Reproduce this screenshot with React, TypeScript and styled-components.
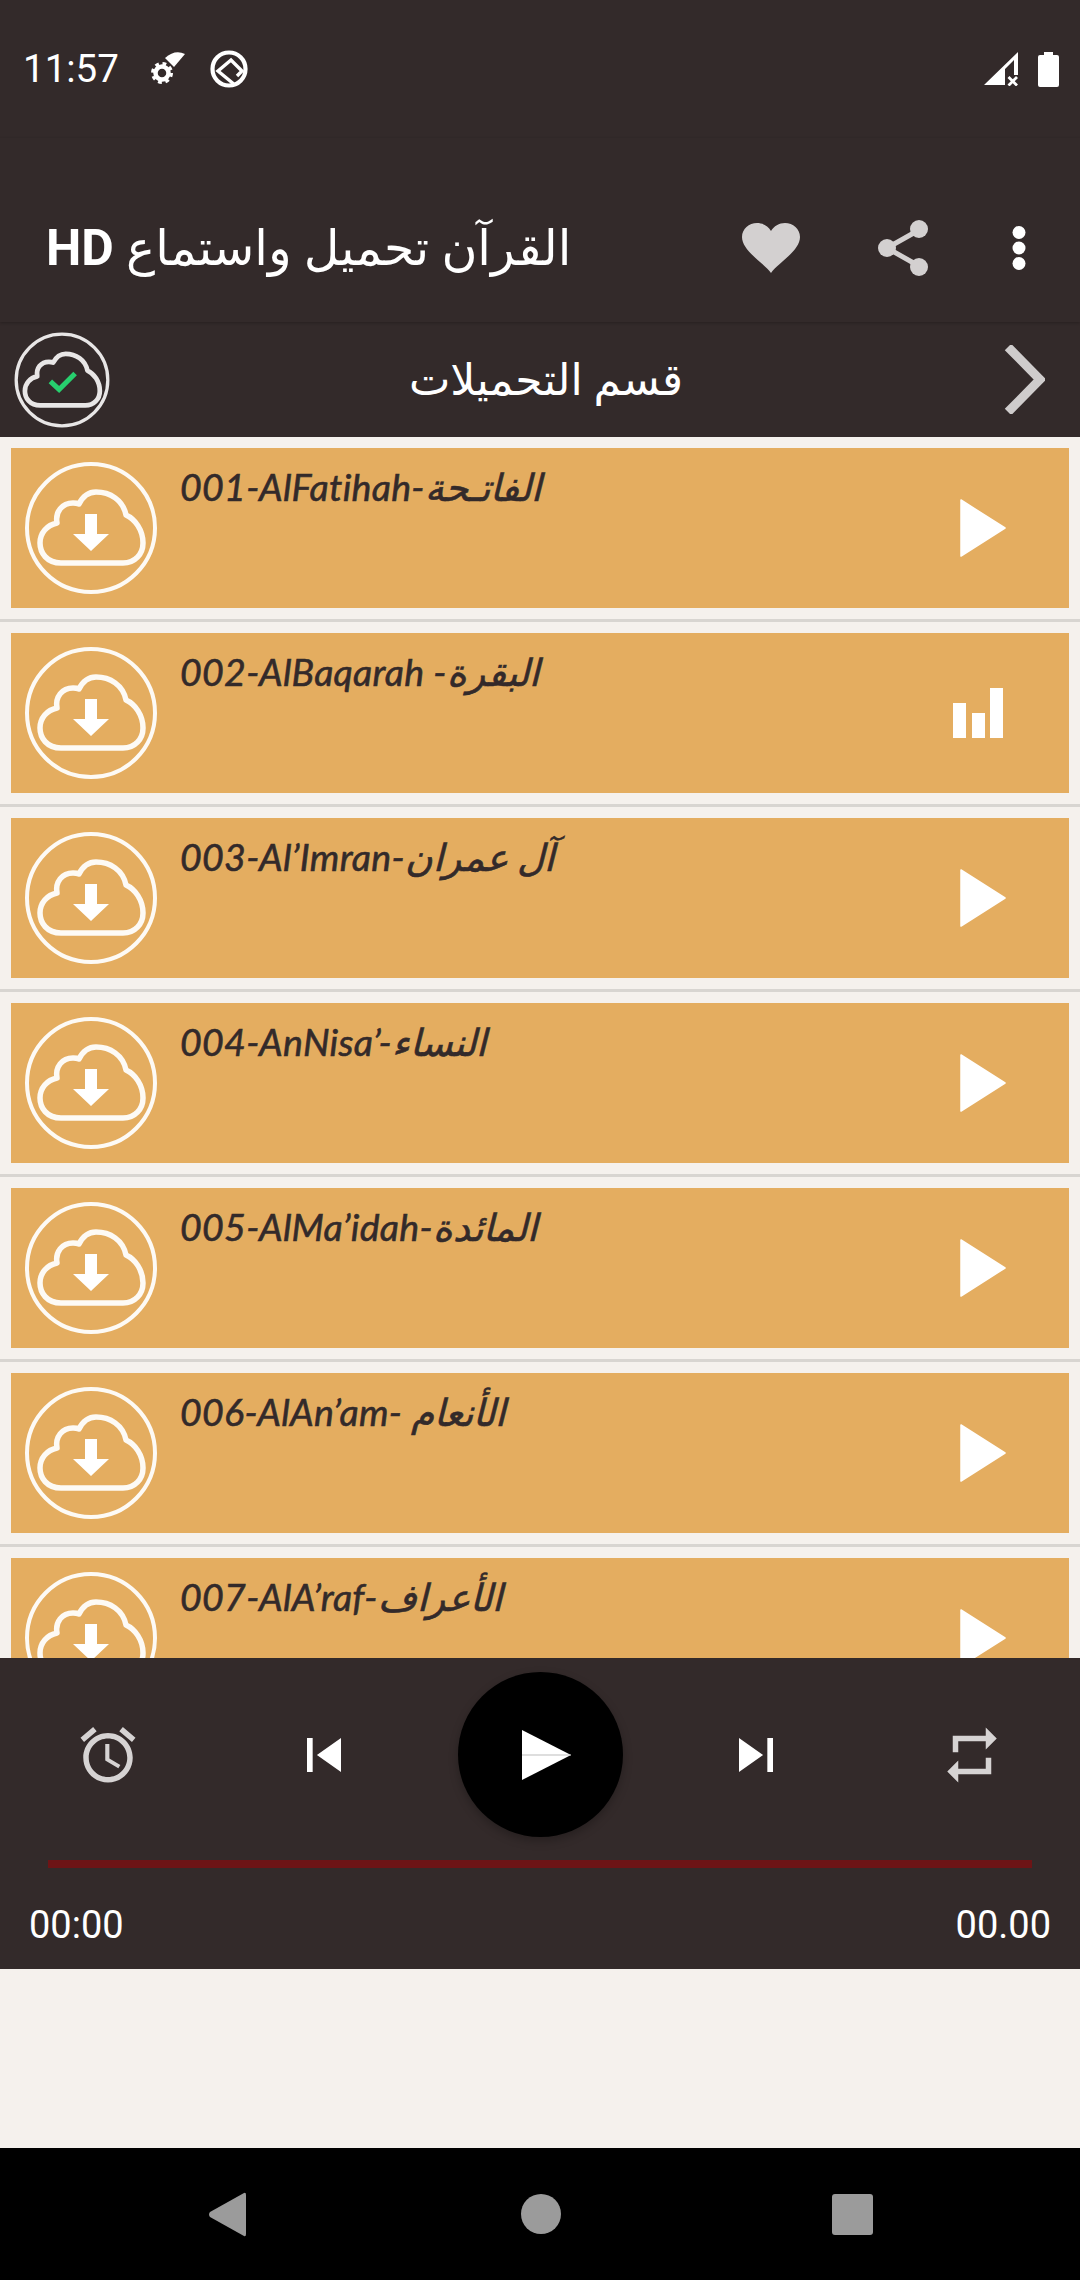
import React from "react";
import styled, { createGlobalStyle } from "styled-components";

const Global = createGlobalStyle`
  html, body { margin: 0; padding: 0; background: #f5f1ed; }
  * { box-sizing: border-box; }
`;

const Page = styled.div`
  width: 1080px;
  height: 2280px;
  display: flex;
  flex-direction: column;
  overflow: hidden;
  background: #f5f1ed;
  font-family: Roboto, "DejaVu Sans", sans-serif;
`;

const StatusBar = styled.div`
  height: 138px;
  flex: none;
  background: #332a2a;
  display: flex;
  align-items: center;
  padding: 0 21px 0 23px;
  color: #fff;
`;
const Clock = styled.span`
  font-size: 38.5px;
  line-height: 44px;
  margin-right: 31px;
`;
const StatusGap = styled.div`
  flex: 1;
`;
const StatusIcon = styled.svg<{ $gap?: number }>`
  display: block;
  flex: none;
  margin-right: ${(p) => p.$gap ?? 0}px;
`;

const Toolbar = styled.div`
  height: 184px;
  flex: none;
  background: #332a2a;
  display: flex;
  align-items: center;
  padding: 36px 54px 0 46px;
  position: relative;
  z-index: 1;
  box-shadow: 0 1px 3px rgba(0, 0, 0, 0.25);
`;
const AppTitle = styled.div`
  flex: 1;
  color: #fff;
  font-size: 49px;
  white-space: nowrap;
  text-align: left;
`;
const AppTitleText = styled.span`
  display: inline-block;
`;
const AppTitleBadge = styled.span`
  font-weight: 700;
  font-size: 50px;
`;
const ToolIcon = styled.svg<{ $gap: number }>`
  display: block;
  flex: none;
  margin-left: ${(p) => p.$gap}px;
`;

const SubHeader = styled.div`
  height: 115px;
  flex: none;
  background: #332a2a;
  display: flex;
  align-items: center;
  padding: 0 35px 0 14px;
`;
const SubTitle = styled.div`
  flex: 1;
  text-align: center;
  color: #fff;
  font-size: 44px;
  padding-right: 22px;
`;
const Chevron = styled.svg`
  flex: none;
  display: block;
`;

const List = styled.div`
  flex: 1;
  min-height: 0;
  overflow: hidden;
`;
const Row = styled.div`
  height: 185px;
  padding: 11px;
  border-bottom: 3px solid #d8d5d1;
`;
const Card = styled.div`
  height: 160px;
  background: #e4ad60;
  display: flex;
  align-items: center;
  padding: 0 63px 0 14px;
`;
const RowTitle = styled.div`
  flex: 1;
  align-self: flex-start;
  margin: 14px 0 0 23px;
  font-family: Lato, "DejaVu Sans", sans-serif;
  font-style: italic;
  font-weight: 400;
  font-size: 37.5px;
  letter-spacing: 0.3px;
  line-height: 50px;
  color: #332a2a;
  -webkit-text-stroke: 0.6px #332a2a;
  white-space: nowrap;
`;
const RowIcon = styled.svg`
  flex: none;
  display: block;
`;
const BarsIcon = styled.svg`
  flex: none;
  display: block;
  margin: 0 3px 0 -7px;
`;

const Player = styled.div`
  height: 311px;
  flex: none;
  background: #332a2a;
  padding-top: 14px;
  display: flex;
  flex-direction: column;
`;
const Controls = styled.div`
  height: 165px;
  display: grid;
  grid-template-columns: repeat(5, 1fr);
  align-items: center;
  justify-items: center;
`;
const BigPlay = styled.div`
  width: 165px;
  height: 165px;
  border-radius: 50%;
  background: #000;
  display: flex;
  align-items: center;
  justify-content: center;
  box-shadow: 0 4px 10px rgba(0, 0, 0, 0.25);
`;
const BigPlayIcon = styled.svg`
  margin-left: 12px;
`;
const Progress = styled.div`
  height: 8px;
  margin: 23px 48px 0;
  background: #6d1416;
`;
const Times = styled.div`
  margin-top: 35px;
  padding: 0 29px;
  display: flex;
  justify-content: space-between;
  color: #fff;
  font-size: 38px;
  line-height: 44px;
`;

const Blank = styled.div`
  height: 179px;
  flex: none;
  background: #f5f1ed;
`;

const NavBar = styled.div`
  height: 132px;
  flex: none;
  background: #000;
  display: flex;
  align-items: center;
  justify-content: center;
  gap: 271px;
`;
const BackIcon = styled.svg`
  display: block;
  margin-right: 4px;
`;
const Dot = styled.div`
  width: 40px;
  height: 40px;
  border-radius: 50%;
  background: #9b9b9b;
`;
const Square = styled.div`
  width: 41px;
  height: 41px;
  border-radius: 3px;
  background: #9b9b9b;
`;

const CLOUD =
  "M36 101 C22 101 15 91 15 81 C15 71 22 63 32 61 C30 50 37 41 48 41 C50 41 52 41 54 42 C58 34 64 30 71 30 C85 30 98 38 101 53 C110 57 118 68 118 81 C118 92 110 101 98 101 Z";

const CloudDown = () => (
  <RowIcon width="132" height="132" viewBox="0 0 132 132">
    <circle cx="66" cy="66" r="64" fill="none" stroke="#fdfaf5" strokeWidth="4" />
    <path d={CLOUD} fill="none" stroke="#fdfaf5" strokeWidth="5.5" strokeLinejoin="round" />
    <path d="M60 52 H72 V72 H84 L66 89 L48 72 H60 Z" fill="#fff" />
  </RowIcon>
);

const CloudOk = () => (
  <RowIcon width="96" height="96" viewBox="0 0 132 132">
    <circle cx="66" cy="66" r="63" fill="none" stroke="#e8e6e6" strokeWidth="4.5" />
    <path d={CLOUD} fill="none" stroke="#e8e6e6" strokeWidth="6.5" strokeLinejoin="round" />
    <path d="M50 68 L62 79 L84 57" fill="none" stroke="#27cf6e" strokeWidth="7" />
  </RowIcon>
);

const PlayMark = () => (
  <RowIcon width="46" height="58" viewBox="0 0 46 58">
    <path d="M1 1 L45 29 L1 57 Z" fill="#fff" stroke="#fff" strokeWidth="1.5" strokeLinejoin="round" />
  </RowIcon>
);

const BarsMark = () => (
  <BarsIcon width="50" height="50" viewBox="0 0 50 50">
    <rect x="0" y="15" width="13" height="35" fill="#fff" />
    <rect x="19" y="25" width="13" height="25" fill="#fff" />
    <rect x="37" y="0" width="13" height="50" fill="#fff" />
  </BarsIcon>
);

const tracks = [
  "001-AlFatihah-الفاتـحة",
  "002-AlBaqarah -البقرة",
  "003-Al’Imran-آل عمران",
  "004-AnNisa’-النساء",
  "005-AlMa’idah-المائدة",
  "006-AlAn’am- الأنعام",
  "007-AlA’raf-الأعراف",
];

export default function App() {
  return (
    <Page>
      <Global />
      <StatusBar>
        <Clock>11:57</Clock>
        <StatusIcon width="38" height="40" viewBox="0 0 38 40" $gap={22}>
          <path d="M15 9 Q25 0 35 5 L24 18 Z" fill="#fff" />
          <circle cx="12" cy="24" r="6.5" fill="none" stroke="#fff" strokeWidth="4.5" />
          <circle cx="12" cy="24" r="9.5" fill="none" stroke="#fff" strokeWidth="3" strokeDasharray="3.8 3.7" />
        </StatusIcon>
        <StatusIcon width="38" height="38" viewBox="0 0 38 38">
          <circle cx="19" cy="19" r="16.5" fill="none" stroke="#fff" strokeWidth="4.2" />
          <path d="M27 26 L32 21 L21 10 L8 21 L25 35" fill="none" stroke="#fff" strokeWidth="3.4" />
        </StatusIcon>
        <StatusGap />
        <StatusIcon width="34" height="34" viewBox="0 0 34 34" $gap={20}>
          <path d="M0 33 L34 0 V23 H30 V8 L21 17 V33 Z" fill="#fff" />
          <path d="M24.5 25 L33 33.5 M33 25 L24.5 33.5" stroke="#fff" strokeWidth="2.8" />
        </StatusIcon>
        <StatusIcon width="21" height="35" viewBox="0 0 21 35">
          <path d="M6 0 H15 V3 H19 Q21 3 21 5 V33 Q21 35 19 35 H2 Q0 35 0 33 V5 Q0 3 2 3 H6 Z" fill="#fff" />
        </StatusIcon>
      </StatusBar>

      <Toolbar>
        <AppTitle>
          <AppTitleText dir="rtl">
            القرآن تحميل واستماع <AppTitleBadge>HD</AppTitleBadge>
          </AppTitleText>
        </AppTitle>
        <ToolIcon $gap={0} width="58" height="50" viewBox="0 0 58 50">
          <path d="M29 50 C22 40 0 28 0 14 C0 6 7 0 15 0 C21 0 26 3 29 8 C32 3 37 0 43 0 C51 0 58 6 58 14 C58 28 36 40 29 50 Z" fill="#d3d0d0" />
        </ToolIcon>
        <ToolIcon $gap={78} width="50" height="56" viewBox="0 0 50 56">
          <path d="M41 10 L9 28 L41 46" fill="none" stroke="#d3d0d0" strokeWidth="5" />
          <circle cx="41" cy="9" r="9" fill="#d3d0d0" />
          <circle cx="9" cy="28" r="9" fill="#d3d0d0" />
          <circle cx="41" cy="47" r="9" fill="#d3d0d0" />
        </ToolIcon>
        <ToolIcon $gap={84} width="14" height="44" viewBox="0 0 14 44">
          <circle cx="7" cy="6.5" r="6.5" fill="#fff" />
          <circle cx="7" cy="22" r="6.5" fill="#fff" />
          <circle cx="7" cy="37.5" r="6.5" fill="#fff" />
        </ToolIcon>
      </Toolbar>

      <SubHeader>
        <CloudOk />
        <SubTitle>قسم التحميلات</SubTitle>
        <Chevron width="41" height="69" viewBox="0 0 41 69">
          <path d="M4 2 L36 34.5 L4 67" fill="none" stroke="#cfcccc" strokeWidth="9" />
        </Chevron>
      </SubHeader>

      <List>
        {tracks.map((t, i) => (
          <Row key={t}>
            <Card>
              <CloudDown />
              <RowTitle>{t}</RowTitle>
              {i === 1 ? <BarsMark /> : <PlayMark />}
            </Card>
          </Row>
        ))}
      </List>

      <Player>
        <Controls>
          <svg width="66" height="66" viewBox="0 0 24 24" fill="#d6d3d3">
            <path d="M22 5.72l-4.6-3.86-1.29 1.53 4.6 3.86L22 5.72zM7.88 3.39L6.6 1.86 2 5.71l1.29 1.53 4.59-3.85zM12.5 8H11v6l4.75 2.85.75-1.23-4-2.37V8zM12 4c-4.97 0-9 4.03-9 9s4.02 9 9 9c4.97 0 9-4.03 9-9s-4.03-9-9-9zm0 16c-3.87 0-7-3.13-7-7s3.13-7 7-7 7 3.13 7 7-3.13 7-7 7z" />
          </svg>
          <svg width="68" height="68" viewBox="0 0 24 24" fill="#fff">
            <path d="M6 6h2v12H6zm3.5 6l8.5 6V6z" />
          </svg>
          <BigPlay>
            <BigPlayIcon width="49" height="50" viewBox="0 0 49 50">
              <path d="M0 0 L49 25 L0 50 Z" fill="#fff" />
              <path d="M0 25 H49" stroke="#bdbdbd" strokeWidth="1" />
            </BigPlayIcon>
          </BigPlay>
          <svg width="68" height="68" viewBox="0 0 24 24" fill="#fff">
            <path d="M6 18l8.5-6L6 6v12zM16 6v12h2V6h-2z" />
          </svg>
          <svg width="66" height="66" viewBox="0 0 24 24" fill="#d6d3d3">
            <path d="M7 7h10v3l4-4-4-4v3H5v6h2V7zm10 10H7v-3l-4 4 4 4v-3h12v-6h-2v4z" />
          </svg>
        </Controls>
        <Progress />
        <Times>
          <span>00:00</span>
          <span>00.00</span>
        </Times>
      </Player>

      <Blank />

      <NavBar>
        <BackIcon width="38" height="45" viewBox="0 0 38 45">
          <path d="M36 1 Q38 0 38 3 V42 Q38 45 36 44 L2 25 Q0 22.5 2 20 Z" fill="#9b9b9b" />
        </BackIcon>
        <Dot />
        <Square />
      </NavBar>
    </Page>
  );
}
